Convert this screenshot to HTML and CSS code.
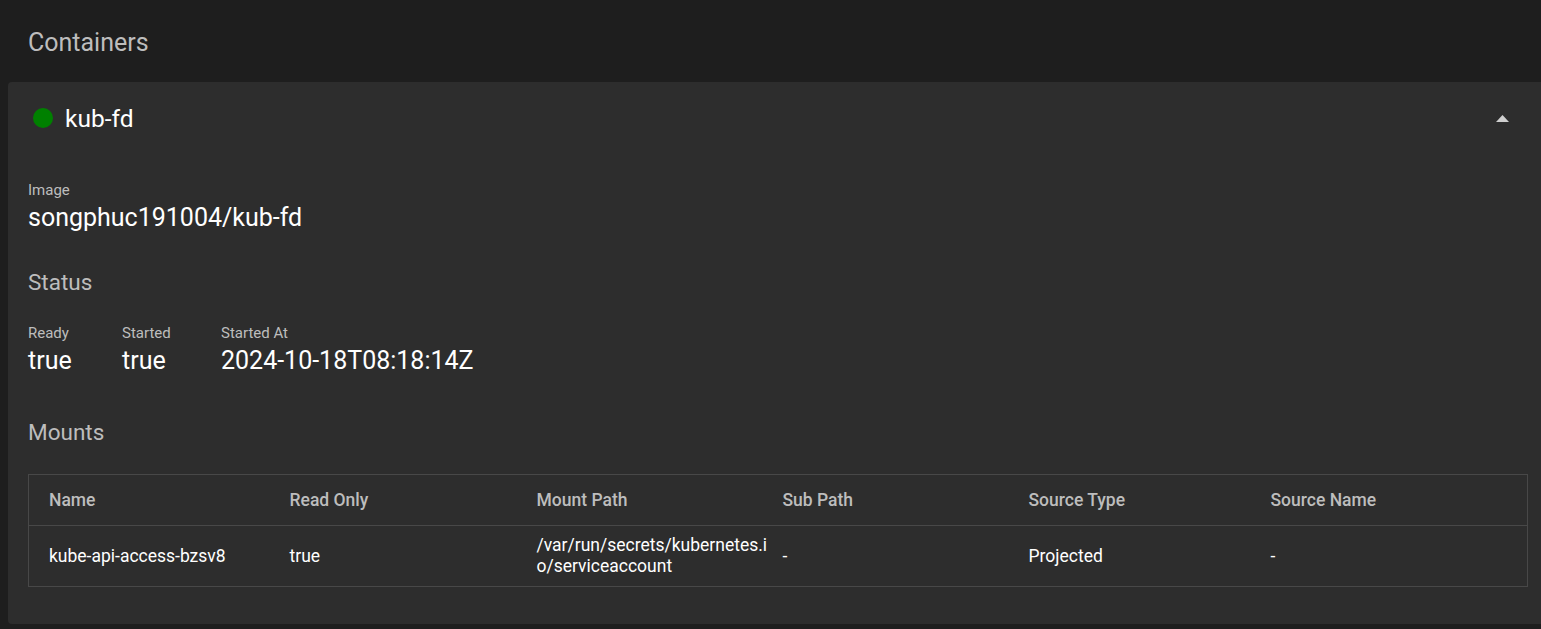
FILE: index.html
```html
<!DOCTYPE html>
<html>
<head>
<meta charset="utf-8">
<link rel="stylesheet" href="styles.css">
</head>
<body>
<div class="page">
  <h2 class="section-title">Containers</h2>
  <div class="card">
    <div class="card-header">
      <span class="status-dot"></span>
      <span class="container-name">kub-fd</span>
      <span class="spacer"></span>
      <svg class="collapse-icon" width="13" height="7" viewBox="0 0 13 7"><path d="M0 7 L6.5 0 L13 7 Z" fill="#cfcfcf"/></svg>
    </div>
    <div class="card-body">
      <div class="field">
        <div class="label">Image</div>
        <div class="value">songphuc191004/kub-fd</div>
      </div>
      <h3 class="sub-title status-title">Status</h3>
      <div class="status-row">
        <div class="field">
          <div class="label">Ready</div>
          <div class="value">true</div>
        </div>
        <div class="field">
          <div class="label">Started</div>
          <div class="value">true</div>
        </div>
        <div class="field">
          <div class="label">Started At</div>
          <div class="value">2024-10-18T08:18:14Z</div>
        </div>
      </div>
      <h3 class="sub-title mounts-title">Mounts</h3>
      <table class="mounts">
        <colgroup>
          <col class="c1"><col class="c2"><col class="c3"><col class="c4"><col class="c5"><col class="c6">
        </colgroup>
        <thead>
          <tr><th>Name</th><th>Read Only</th><th>Mount Path</th><th>Sub Path</th><th>Source Type</th><th>Source Name</th></tr>
        </thead>
        <tbody>
          <tr><td>kube-api-access-bzsv8</td><td>true</td><td class="path"><span class="path-text">/var/run/secrets/kubernetes.io/serviceaccount</span></td><td>-</td><td>Projected</td><td>-</td></tr>
        </tbody>
      </table>
    </div>
  </div>
</div>
</body>
</html>
```

FILE: styles.css
```css
html, body {
  margin: 0;
  padding: 0;
  background: #1e1e1e;
  font-family: Roboto, "Liberation Sans", sans-serif;
  color: #ffffff;
  overflow: hidden;
}

.page {
  padding: 0 0 0 8px;
}

.section-title {
  margin: 0;
  padding: 28px 20px 0 20px;
  height: 82px;
  box-sizing: border-box;
  font-size: 25px;
  font-weight: 400;
  line-height: 30px;
  color: #bdbdbd;
}

.card {
  background: #2d2d2d;
  border-radius: 4px 0 0 4px;
  margin-right: -10px;
  padding: 0 30px 37px 20px;
}

.card-header {
  display: flex;
  align-items: center;
  height: 72px;
}

.status-dot {
  width: 20px;
  height: 20px;
  border-radius: 50%;
  background: #008000;
  margin: 0 12px 0 5px;
}

.container-name {
  font-size: 24.5px;
  line-height: 29px;
}

.spacer { flex: 1; }

.collapse-icon {
  margin-right: 12px;
  margin-top: 1px;
}

.card-body {
  padding-top: 27px;
}

.label {
  font-size: 15px;
  line-height: 18px;
  color: #bdbdbd;
  margin-bottom: 4px;
}

.value {
  font-size: 25px;
  line-height: 30px;
  color: #ffffff;
}

.sub-title {
  margin: 0;
  font-size: 22.5px;
  font-weight: 400;
  line-height: 27px;
  color: #bdbdbd;
}

.status-title {
  padding-top: 36px;
}

.status-row {
  display: flex;
  padding-top: 28px;
}

.status-row .field:nth-child(1) { width: 94px; }
.status-row .field:nth-child(2) { width: 99px; }

.mounts-title {
  padding-top: 43px;
}

.mounts {
  margin-top: 28px;
  width: 1500px;
  border-collapse: collapse;
  border: 1px solid #484848;
  table-layout: fixed;
  font-size: 17.5px;
}

.c1 { width: 241px; }
.c2 { width: 247px; }
.c3 { width: 246px; }
.c4 { width: 246px; }
.c5 { width: 242px; }
.c6 { width: auto; }

.mounts th {
  text-align: left;
  font-weight: 500;
  color: #bdbdbd;
  height: 50px;
  padding: 0 0 0 20px;
  border-bottom: 1px solid #484848;
}

.mounts td {
  color: #ffffff;
  height: 60px;
  padding: 0 0 0 20px;
  line-height: 21px;
}

.mounts td.path {
  word-break: break-all;
}

.path-text {
  display: block;
  margin-right: -8px;
}
```
